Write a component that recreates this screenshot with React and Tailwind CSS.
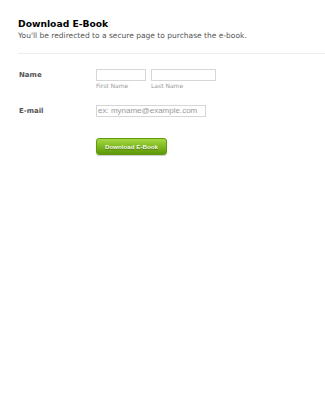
import React from 'react';

const App = () => {
  return (
    <div className="w-[325px] h-[400px] bg-white" style={{ fontFamily: '"DejaVu Sans", Verdana, sans-serif' }}>
      <div className="pl-[18px] pt-[18px]">
        <h1 className="text-[9.2px] font-bold text-black leading-[12px]">Download E-Book</h1>
        <p className="text-[7.5px] text-[#555] leading-[10px] mt-[1px]">You'll be redirected to a secure page to purchase the e-book.</p>
        <div className="mt-[12px] border-t border-[#eeeeee]" />

        {/* Name row */}
        <div className="flex mt-[15px]">
          <label className="w-[78px] pl-[1px] pt-[1px] text-[7px] font-bold text-[#555] leading-[10px]">Name</label>
          <div className="flex gap-[5px]">
            <div className="flex flex-col">
              <div className="w-[50px] h-[12px] border border-[#d6d6d6] bg-white" />
              <span className="text-[6px] text-[#999] leading-[8px] mt-[1px]">First Name</span>
            </div>
            <div className="flex flex-col">
              <div className="w-[65px] h-[12px] border border-[#d6d6d6] bg-white" />
              <span className="text-[6px] text-[#999] leading-[8px] mt-[1px]">Last Name</span>
            </div>
          </div>
        </div>

        {/* E-mail row */}
        <div className="flex mt-[15px]">
          <label className="w-[78px] pl-[1px] pt-[1px] text-[7px] font-bold text-[#555] leading-[10px]">E-mail</label>
          <div className="w-[110px] h-[12px] border border-[#d6d6d6] bg-white flex items-center px-[1px]">
            <span className="text-[8px] text-[#999] leading-[10px]" style={{ fontFamily: '"Liberation Sans", Arial, sans-serif' }}>ex: myname@example.com</span>
          </div>
        </div>

        {/* Button */}
        <div className="flex pl-[78px] mt-[21px]">
          <button
            className="w-[71px] h-[17px] rounded-[3px] border border-[#5f9a10] bg-gradient-to-b from-[#a6d943] via-[#7fba1e] to-[#5e980b] text-[#f4f9ea] text-[6.2px] font-bold shadow-[0_1px_1px_rgba(0,0,0,0.2)] [text-shadow:0_1px_1px_rgba(0,0,0,0.35)]"
            style={{ fontFamily: '"Liberation Sans", Arial, sans-serif' }}
          >
            Download E-Book
          </button>
        </div>
      </div>
    </div>
  );
};

export default App;
